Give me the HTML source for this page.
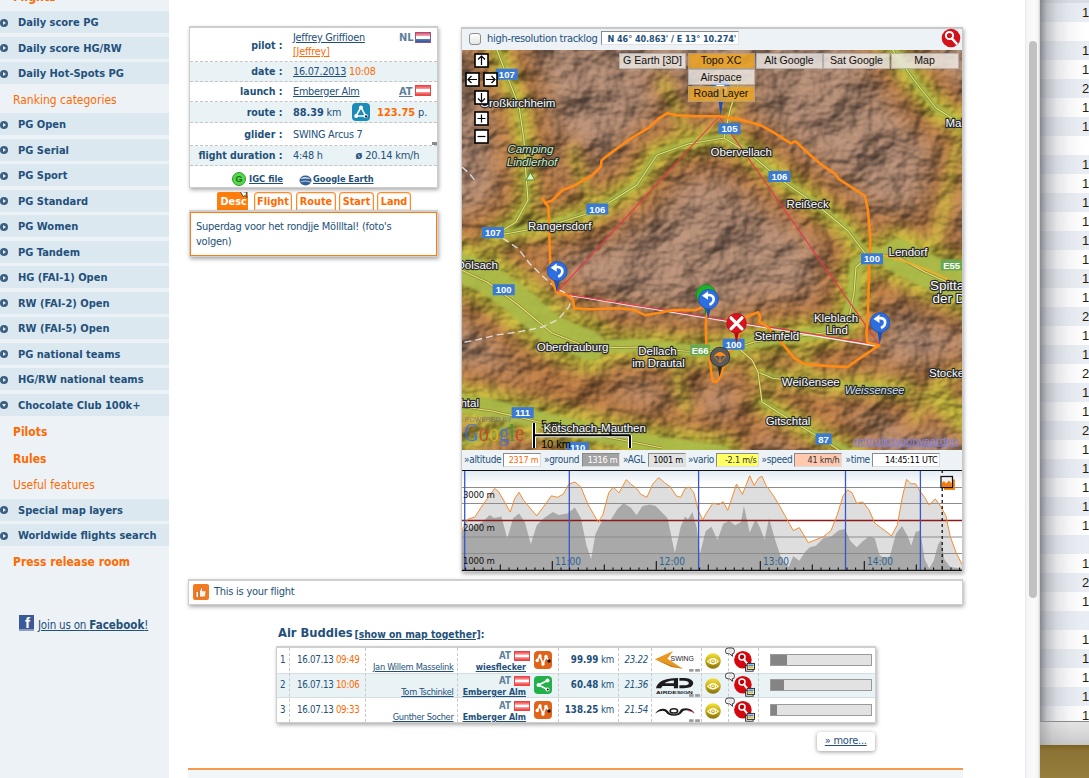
<!DOCTYPE html><html><head><meta charset="utf-8"><title>Flight</title><style>
*{box-sizing:border-box}
html,body{margin:0;padding:0}
body{width:1089px;height:778px;overflow:hidden;position:relative;background:#fff;font-family:"DejaVu Sans Condensed","Liberation Sans",sans-serif;font-size:11px;color:#23507a}
.a{position:absolute}
.t{position:absolute;white-space:nowrap;line-height:14px;letter-spacing:-0.25px}
.b{font-weight:bold;letter-spacing:0}
.o{color:#ff6a00}
.u{text-decoration:underline}
#side{left:0;top:0;width:169px;height:778px;background:#edf2f6}
.band{position:absolute;left:0;width:169px;height:22.3px;background:#dce8f0}
.mi{position:absolute;left:18px;white-space:nowrap;font-weight:bold;font-size:11px;line-height:22px;color:#23507a}
.mo{position:absolute;left:13px;white-space:nowrap;font-size:12px;line-height:22px;color:#ff6a00}
.bul{position:absolute;left:-0.3px;width:8px;height:8px;border-radius:4px;background:#3a5f80}
.bul:after{content:"";position:absolute;left:2.8px;top:1.8px;border-left:3.6px solid #e8f0f5;border-top:2.2px solid transparent;border-bottom:2.2px solid transparent}
.bul.d:after{left:1.8px;top:2.8px;border-top:3.6px solid #e8f0f5;border-left:2.2px solid transparent;border-right:2.2px solid transparent;border-bottom:0}
.panel{position:absolute;background:#fff;border:1px solid #cdcdcd;border-top-width:2px;box-shadow:1px 2px 4px rgba(0,0,0,.33)}
.row{position:absolute;left:0;width:247px;border-bottom:1px dashed #c4c4c4}
.alt{background:#e9f3f6}
.lab{position:absolute;right:154.5px;white-space:nowrap;font-weight:bold;font-size:10.5px;line-height:14px}
.val{position:absolute;left:103px;white-space:nowrap;font-size:10.8px;line-height:14px;letter-spacing:-0.25px}
</style></head><body>
<div id="side" class="a">
<div class="mo" style="top:-14.5px;font-weight:bold;font-size:12.3px">Flights</div>
<div class="band" style="top:11.2px"></div>
<div class="bul" style="top:18.9px"></div>
<div class="mi" style="top:12.2px">Daily score PG</div>
<div class="band" style="top:36.7px"></div>
<div class="bul" style="top:44.4px"></div>
<div class="mi" style="top:37.7px">Daily score HG/RW</div>
<div class="band" style="top:62.2px"></div>
<div class="bul" style="top:69.9px"></div>
<div class="mi" style="top:63.2px">Daily Hot-Spots PG</div>
<div class="mo" style="top:89px">Ranking categories</div>
<div class="band" style="top:113.2px"></div>
<div class="bul" style="top:120.9px"></div>
<div class="mi" style="top:114.2px">PG Open</div>
<div class="band" style="top:138.7px"></div>
<div class="bul" style="top:146.4px"></div>
<div class="mi" style="top:139.7px">PG Serial</div>
<div class="band" style="top:164.2px"></div>
<div class="bul" style="top:171.9px"></div>
<div class="mi" style="top:165.2px">PG Sport</div>
<div class="band" style="top:189.7px"></div>
<div class="bul" style="top:197.4px"></div>
<div class="mi" style="top:190.7px">PG Standard</div>
<div class="band" style="top:215.2px"></div>
<div class="bul" style="top:222.9px"></div>
<div class="mi" style="top:216.2px">PG Women</div>
<div class="band" style="top:240.7px"></div>
<div class="bul" style="top:248.4px"></div>
<div class="mi" style="top:241.7px">PG Tandem</div>
<div class="band" style="top:266.2px"></div>
<div class="bul" style="top:273.9px"></div>
<div class="mi" style="top:267.2px">HG (FAI-1) Open</div>
<div class="band" style="top:291.7px"></div>
<div class="bul" style="top:299.4px"></div>
<div class="mi" style="top:292.7px">RW (FAI-2) Open</div>
<div class="band" style="top:317.2px"></div>
<div class="bul" style="top:324.9px"></div>
<div class="mi" style="top:318.2px">RW (FAI-5) Open</div>
<div class="band" style="top:342.7px"></div>
<div class="bul" style="top:350.4px"></div>
<div class="mi" style="top:343.7px">PG national teams</div>
<div class="band" style="top:368.2px"></div>
<div class="bul" style="top:375.9px"></div>
<div class="mi" style="top:369.2px">HG/RW national teams</div>
<div class="band" style="top:393.7px"></div>
<div class="bul d" style="top:401.4px"></div>
<div class="mi" style="top:394.7px">Chocolate Club 100k+</div>
<div class="mo" style="top:421px;font-weight:bold">Pilots</div>
<div class="mo" style="top:448px;font-weight:bold">Rules</div>
<div class="mo" style="top:474px">Useful features</div>
<div class="band" style="top:498.7px"></div>
<div class="bul" style="top:506.4px"></div>
<div class="mi" style="top:499.7px">Special map layers</div>
<div class="band" style="top:524.2px"></div>
<div class="bul" style="top:531.9px"></div>
<div class="mi" style="top:525.2px">Worldwide flights search</div>
<div class="mo" style="top:551px;font-weight:bold">Press release room</div>
<div class="a" style="left:19px;top:615px;width:15px;height:16px;background:#3b5998;border-bottom:2px solid #8b9dc3"><div class="a" style="left:6px;top:0px;color:#fff;font:bold 15px/16px 'Liberation Sans',sans-serif">f</div></div>
<div class="t u" style="left:38px;top:618px;font-size:11.5px;letter-spacing:-0.2px">Join us on <b style="letter-spacing:0">Facebook</b>!</div>
</div>
<div class="panel" style="left:189px;top:26px;width:249px;height:162px">
<div class="row" style="top:1px;height:33px"><div class="lab" style="top:8.5px">pilot :</div></div>
<div class="row alt" style="top:34px;height:20px"><div class="lab" style="top:2.0px">date :</div></div>
<div class="row" style="top:54px;height:20px"><div class="lab" style="top:2.0px">launch :</div></div>
<div class="row alt" style="top:74px;height:21px"><div class="lab" style="top:2.5px">route :</div></div>
<div class="row" style="top:95px;height:23px"><div class="lab" style="top:3.5px">glider :</div></div>
<div class="row alt" style="top:118px;height:20px"><div class="lab" style="top:2.0px">flight duration :</div></div>
<div class="val u" style="top:3px">Jeffrey Griffioen</div>
<div class="val u o" style="top:17px">[Jeffrey]</div>
<div class="t b" style="left:209px;top:3px;color:#5d7f9c">NL</div><div class="a" style="left:225px;top:4px;width:16px;height:11px;border:1px solid #8a5a80;background:linear-gradient(#f0506a 0,#f8a0ac 30%,#ffffff 36%,#ffffff 62%,#5b7fc4 66%,#34549e 100%)"></div>
<div class="val" style="top:36.5px"><span class="u">16.07.2013</span> <span class="o">10:08</span></div>
<div class="val u" style="top:56.5px">Emberger Alm</div>
<div class="t b u" style="left:209px;top:56.5px;color:#5d7f9c">AT</div><div class="a" style="left:225px;top:57px;width:16px;height:11px;border:1px solid #e84444;background:linear-gradient(#f04a4a 0,#f79a9a 30%,#ffffff 36%,#ffffff 62%,#f79a9a 68%,#ee3b3b 100%)"></div>
<div class="val" style="top:77.7px"><b style="letter-spacing:0">88.39</b> km</div>
<svg class="a" style="left:162px;top:75px" width="18" height="18" viewBox="0 0 18 18"><rect width="18" height="18" rx="4" fill="#1b8bb8"/><path d="M9 4.2 L4 13 L13.6 13 Z" fill="none" stroke="#fff" stroke-width="1.6"/><circle cx="9" cy="4.5" r="2" fill="#fff"/><circle cx="4.2" cy="13" r="2" fill="#fff"/><circle cx="13.6" cy="13" r="2.1" fill="#fff"/><circle cx="14" cy="13.4" r="1.1" fill="#113"/></svg>
<div class="t" style="left:187px;top:77.7px"><b class="o" style="letter-spacing:0">123.75</b> p.</div>
<div class="val" style="top:99.5px">SWING Arcus 7</div>
<div class="a" style="left:242px;top:114px;width:5px;height:3px;background:#8a8a8a"></div>
<div class="val" style="top:120.5px">4:48 h</div>
<div class="t" style="left:165.5px;top:120.5px"><b style="letter-spacing:0">ø</b> 20.14 km/h</div>
<div class="a" style="left:42px;top:144px;width:14px;height:14px;border-radius:7px;background:#55d84a;border:1px solid #2c9b2a;color:#1d6b1c;font:bold 9px/12px 'Liberation Sans',sans-serif;text-align:center">G</div>
<div class="t b u" style="left:59px;top:143.5px;font-size:9.4px">IGC file</div>
<svg class="a" style="left:109px;top:146px" width="13" height="12" viewBox="0 0 13 12"><ellipse cx="6.5" cy="6.5" rx="6" ry="5" fill="#355f92"/><path d="M1 5 Q6 1 12 5 Q7 4 1 5Z" fill="#dfe8f2"/><path d="M1.5 8 Q7 6 12 8.5" stroke="#9db7d6" stroke-width="1.2" fill="none"/></svg>
<div class="t b u" style="left:123px;top:143.5px;font-size:9.2px">Google Earth</div>
</div>
<div class="a" style="left:216.7px;top:192px;width:31.5px;height:19px;background:#ff7d0a;border-radius:2px 2px 0 0"></div>
<div class="t b" style="left:220.5px;top:194.8px;color:#fff;font-size:10.8px">Desc</div>
<svg class="a" style="left:238.5px;top:191.5px" width="10" height="7" viewBox="0 2 12 9"><path d="M1 1 L10 2.5 L8.5 5 L10 9 L7 6.5 L5 8 Z" fill="#fff" stroke="#222" stroke-width="1"/></svg>
<div class="a" style="left:254px;top:192px;width:38px;height:18px;border:1px solid #ff8a2a;border-bottom:0;border-radius:4px 4px 0 0;box-shadow:inset 0 0 0 1px #ffe3cc"></div>
<div class="t b o" style="left:254px;width:38px;text-align:center;top:194.8px;font-size:10.8px">Flight</div>
<div class="a" style="left:296px;top:192px;width:40px;height:18px;border:1px solid #ff8a2a;border-bottom:0;border-radius:4px 4px 0 0;box-shadow:inset 0 0 0 1px #ffe3cc"></div>
<div class="t b o" style="left:296px;width:40px;text-align:center;top:194.8px;font-size:10.8px">Route</div>
<div class="a" style="left:339px;top:192px;width:35px;height:18px;border:1px solid #ff8a2a;border-bottom:0;border-radius:4px 4px 0 0;box-shadow:inset 0 0 0 1px #ffe3cc"></div>
<div class="t b o" style="left:339px;width:35px;text-align:center;top:194.8px;font-size:10.8px">Start</div>
<div class="a" style="left:377px;top:192px;width:34px;height:18px;border:1px solid #ff8a2a;border-bottom:0;border-radius:4px 4px 0 0;box-shadow:inset 0 0 0 1px #ffe3cc"></div>
<div class="t b o" style="left:377px;width:34px;text-align:center;top:194.8px;font-size:10.8px">Land</div>
<div class="a" style="left:189px;top:210px;width:249px;height:47.3px;background:#d0d0d0;box-shadow:1px 2px 4px rgba(0,0,0,.35)"></div>
<div class="a" style="left:190px;top:211.5px;width:247px;height:44.8px;background:#fff;border:1px solid #ff7a0f"></div>
<div class="t" style="left:196px;top:220px;line-height:14.8px;white-space:normal;width:236px">Superdag voor het rondjje Möllltal! (foto's<br>volgen)</div>
<div class="panel" style="left:188px;top:578.5px;width:775px;height:26.5px;border-color:#cfcfcf"></div>
<svg class="a" style="left:193px;top:584px" width="16" height="16" viewBox="0 0 16 16"><rect width="16" height="16" rx="2" fill="#f47a20"/><path d="M3 13.5 V7.5 H5.5 V13.5 Z M6.5 13 V7.5 L8.5 3 Q10 3 9.6 5 L9.3 6.8 H12.5 Q13.3 7.4 12.8 8.3 Q13.3 9 12.6 9.8 Q13 10.6 12.3 11.3 Q12.6 12.4 11.6 13 Z" fill="#fff3e6" stroke="#b85410" stroke-width=".6"/></svg>
<div class="t" style="left:214px;top:585px">This is your flight</div>
<div class="t b" style="left:278px;top:624px;font-size:12.8px;line-height:18px">Air Buddies</div>
<div class="t b" style="left:354.5px;top:626.5px;font-size:10.3px"><span class="u">[show on map together]</span>:</div>
<div class="panel" style="left:276px;top:646px;width:600px;height:77px;border-color:#cfcfcf"></div>
<div class="a alt" style="left:277px;top:672.5px;width:598px;height:25px;border-top:1px solid #d4dde2;border-bottom:1px solid #d4dde2"></div>
<div class="a" style="left:289px;top:648px;width:0;height:74px;border-left:1px dashed #c8c8c8"></div>
<div class="a" style="left:364.5px;top:648px;width:0;height:74px;border-left:1px dashed #c8c8c8"></div>
<div class="a" style="left:456.5px;top:648px;width:0;height:74px;border-left:1px dashed #c8c8c8"></div>
<div class="a" style="left:558px;top:648px;width:0;height:74px;border-left:1px dashed #c8c8c8"></div>
<div class="a" style="left:618px;top:648px;width:0;height:74px;border-left:1px dashed #c8c8c8"></div>
<div class="a" style="left:650.5px;top:648px;width:0;height:74px;border-left:1px dashed #c8c8c8"></div>
<div class="a" style="left:701px;top:648px;width:0;height:74px;border-left:1px dashed #c8c8c8"></div>
<div class="a" style="left:728px;top:648px;width:0;height:74px;border-left:1px dashed #c8c8c8"></div>
<div class="a" style="left:758px;top:648px;width:0;height:74px;border-left:1px dashed #c8c8c8"></div>
<div class="t" style="left:280px;top:653.0px;font-size:9.7px">1</div>
<div class="t" style="left:297px;top:653.0px;font-size:9.7px;letter-spacing:-0.3px">16.07.13 <span class="o">09:49</span></div>
<div class="t u" style="left:365px;width:88.5px;text-align:right;top:660.0px;font-size:9.2px;letter-spacing:-0.3px">Jan Willem Masselink</div>
<div class="t b" style="left:457px;width:54px;text-align:right;top:648.8px;font-size:9.7px;color:#5d7f9c">AT</div><div class="a" style="left:513.5px;top:650.8px;width:16px;height:10px;border:1px solid #e84444;background:linear-gradient(#f04a4a 0,#f79a9a 30%,#ffffff 36%,#ffffff 62%,#f79a9a 68%,#ee3b3b 100%)"></div>
<div class="t b u" style="left:457px;width:69px;text-align:right;top:660.0px;font-size:8.8px">wiesflecker</div>
<svg class="a" style="left:534px;top:650.5px" width="18" height="18" viewBox="0 0 18 18"><rect width="18" height="18" rx="4" fill="#e0631a"/><path d="M3 9.5 L6 5 L9 13 L12 5.5 L15 10" fill="none" stroke="#fff" stroke-width="1.6"/><circle cx="3.2" cy="9.5" r="1.7" fill="#fff"/><circle cx="6" cy="5" r="1.7" fill="#fff"/><circle cx="9" cy="13" r="1.7" fill="#fff"/><circle cx="12" cy="5.5" r="1.7" fill="#fff"/><circle cx="15" cy="10" r="1.7" fill="#111"/></svg>
<div class="t" style="left:559px;width:55px;text-align:right;top:653.0px;font-size:9.7px"><b style="letter-spacing:0">99.99</b> km</div>
<div class="t" style="left:619px;width:29px;text-align:right;top:653.0px;font-size:9.7px;font-style:italic;letter-spacing:-0.3px">23.22</div>
<svg class="a" style="left:705px;top:652.8px" width="16" height="16" viewBox="0 0 16 16"><defs><linearGradient id="gg0" x1="0" y1="0" x2="0" y2="1"><stop offset="0" stop-color="#f2e23a"/><stop offset=".5" stop-color="#c9ad16"/><stop offset="1" stop-color="#85700c"/></linearGradient></defs><circle cx="8" cy="8" r="7.8" fill="url(#gg0)"/><path d="M2.6 8.3 Q8 2.6 13.4 8.3 Q8 13.6 2.6 8.3Z" fill="none" stroke="#fffbe0" stroke-width="1.1"/><circle cx="8" cy="8.2" r="2.5" fill="none" stroke="#fffbe0" stroke-width="1.2"/><circle cx="8" cy="8.2" r=".9" fill="#fffbe0"/></svg>
<svg class="a" style="left:724px;top:647.0px" width="32" height="26" viewBox="0 0 32 26"><path d="M1.6 3.2 Q1.6 1 4.3 1 H7.9 Q10.3 1 10.3 3.2 V4.8 Q10.3 6.8 8.1 6.8 L8.6 9.3 L5.6 6.8 H4.3 Q1.6 6.8 1.6 4.8Z" fill="#fff" stroke="#222" stroke-width=".9"/><path d="M3.6 3 H8.3 M3.6 4.8 H8.3" stroke="#bbb" stroke-width=".7"/><circle cx="18.9" cy="12.7" r="8.8" fill="#d4060e"/><circle cx="18" cy="10" r="3" fill="#b00008" stroke="#fff" stroke-width="1.5"/><path d="M20 12.4 L25.3 19.4" stroke="#fff" stroke-width="2" stroke-linecap="round"/><rect x="21.6" y="18.6" width="7.5" height="5.6" fill="#fff" stroke="#222" stroke-width=".9"/><rect x="23.2" y="16.4" width="7.3" height="6" fill="#fff" stroke="#222" stroke-width=".9"/><rect x="24.2" y="17.4" width="5.3" height="2" fill="#4a8de0"/><rect x="24.2" y="19.4" width="5.3" height="2" fill="#d8c23a"/></svg>
<div class="a" style="left:769.5px;top:654.0px;width:102px;height:12px;background:#e2e2e2;border:1px solid #9a9a9a"><div class="a" style="left:0;top:0;width:16px;height:10px;background:#848484"></div></div>
<div class="t" style="left:280px;top:678.0px;font-size:9.7px">2</div>
<div class="t" style="left:297px;top:678.0px;font-size:9.7px;letter-spacing:-0.3px">16.07.13 <span class="o">10:06</span></div>
<div class="t u" style="left:365px;width:88.5px;text-align:right;top:685.0px;font-size:9.2px;letter-spacing:-0.3px">Tom Tschinkel</div>
<div class="t b" style="left:457px;width:54px;text-align:right;top:673.8px;font-size:9.7px;color:#5d7f9c">AT</div><div class="a" style="left:513.5px;top:675.8px;width:16px;height:10px;border:1px solid #e84444;background:linear-gradient(#f04a4a 0,#f79a9a 30%,#ffffff 36%,#ffffff 62%,#f79a9a 68%,#ee3b3b 100%)"></div>
<div class="t b u" style="left:457px;width:69px;text-align:right;top:685.0px;font-size:8.8px">Emberger Alm</div>
<svg class="a" style="left:534px;top:675.5px" width="18" height="18" viewBox="0 0 18 18"><rect width="18" height="18" rx="4" fill="#22b04a"/><path d="M13.5 4.5 L4.5 9 L13.5 13.5" fill="none" stroke="#fff" stroke-width="1.6"/><circle cx="13.5" cy="4.5" r="2" fill="#fff"/><circle cx="4.5" cy="9" r="2" fill="#fff"/><circle cx="13.5" cy="13.5" r="2" fill="#fff"/><circle cx="13.8" cy="13.6" r="1" fill="#111"/></svg>
<div class="t" style="left:559px;width:55px;text-align:right;top:678.0px;font-size:9.7px"><b style="letter-spacing:0">60.48</b> km</div>
<div class="t" style="left:619px;width:29px;text-align:right;top:678.0px;font-size:9.7px;font-style:italic;letter-spacing:-0.3px">21.36</div>
<svg class="a" style="left:705px;top:677.8px" width="16" height="16" viewBox="0 0 16 16"><defs><linearGradient id="gg1" x1="0" y1="0" x2="0" y2="1"><stop offset="0" stop-color="#f2e23a"/><stop offset=".5" stop-color="#c9ad16"/><stop offset="1" stop-color="#85700c"/></linearGradient></defs><circle cx="8" cy="8" r="7.8" fill="url(#gg1)"/><path d="M2.6 8.3 Q8 2.6 13.4 8.3 Q8 13.6 2.6 8.3Z" fill="none" stroke="#fffbe0" stroke-width="1.1"/><circle cx="8" cy="8.2" r="2.5" fill="none" stroke="#fffbe0" stroke-width="1.2"/><circle cx="8" cy="8.2" r=".9" fill="#fffbe0"/></svg>
<svg class="a" style="left:724px;top:672.0px" width="32" height="26" viewBox="0 0 32 26"><path d="M1.6 3.2 Q1.6 1 4.3 1 H7.9 Q10.3 1 10.3 3.2 V4.8 Q10.3 6.8 8.1 6.8 L8.6 9.3 L5.6 6.8 H4.3 Q1.6 6.8 1.6 4.8Z" fill="#fff" stroke="#222" stroke-width=".9"/><path d="M3.6 3 H8.3 M3.6 4.8 H8.3" stroke="#bbb" stroke-width=".7"/><circle cx="18.9" cy="12.7" r="8.8" fill="#d4060e"/><circle cx="18" cy="10" r="3" fill="#b00008" stroke="#fff" stroke-width="1.5"/><path d="M20 12.4 L25.3 19.4" stroke="#fff" stroke-width="2" stroke-linecap="round"/><rect x="21.6" y="18.6" width="7.5" height="5.6" fill="#fff" stroke="#222" stroke-width=".9"/><rect x="23.2" y="16.4" width="7.3" height="6" fill="#fff" stroke="#222" stroke-width=".9"/><rect x="24.2" y="17.4" width="5.3" height="2" fill="#4a8de0"/><rect x="24.2" y="19.4" width="5.3" height="2" fill="#d8c23a"/></svg>
<div class="a" style="left:769.5px;top:679.0px;width:102px;height:12px;background:#e2e2e2;border:1px solid #9a9a9a"><div class="a" style="left:0;top:0;width:13px;height:10px;background:#848484"></div></div>
<div class="t" style="left:280px;top:703.0px;font-size:9.7px">3</div>
<div class="t" style="left:297px;top:703.0px;font-size:9.7px;letter-spacing:-0.3px">16.07.13 <span class="o">09:33</span></div>
<div class="t u" style="left:365px;width:88.5px;text-align:right;top:710.0px;font-size:9.2px;letter-spacing:-0.3px">Gunther Socher</div>
<div class="t b" style="left:457px;width:54px;text-align:right;top:698.8px;font-size:9.7px;color:#5d7f9c">AT</div><div class="a" style="left:513.5px;top:700.8px;width:16px;height:10px;border:1px solid #e84444;background:linear-gradient(#f04a4a 0,#f79a9a 30%,#ffffff 36%,#ffffff 62%,#f79a9a 68%,#ee3b3b 100%)"></div>
<div class="t b u" style="left:457px;width:69px;text-align:right;top:710.0px;font-size:8.8px">Emberger Alm</div>
<svg class="a" style="left:534px;top:700.5px" width="18" height="18" viewBox="0 0 18 18"><rect width="18" height="18" rx="4" fill="#e0631a"/><path d="M3 9.5 L6 5 L9 13 L12 5.5 L15 10" fill="none" stroke="#fff" stroke-width="1.6"/><circle cx="3.2" cy="9.5" r="1.7" fill="#fff"/><circle cx="6" cy="5" r="1.7" fill="#fff"/><circle cx="9" cy="13" r="1.7" fill="#fff"/><circle cx="12" cy="5.5" r="1.7" fill="#fff"/><circle cx="15" cy="10" r="1.7" fill="#111"/></svg>
<div class="t" style="left:559px;width:55px;text-align:right;top:703.0px;font-size:9.7px"><b style="letter-spacing:0">138.25</b> km</div>
<div class="t" style="left:619px;width:29px;text-align:right;top:703.0px;font-size:9.7px;font-style:italic;letter-spacing:-0.3px">21.54</div>
<svg class="a" style="left:705px;top:702.8px" width="16" height="16" viewBox="0 0 16 16"><defs><linearGradient id="gg2" x1="0" y1="0" x2="0" y2="1"><stop offset="0" stop-color="#f2e23a"/><stop offset=".5" stop-color="#c9ad16"/><stop offset="1" stop-color="#85700c"/></linearGradient></defs><circle cx="8" cy="8" r="7.8" fill="url(#gg2)"/><path d="M2.6 8.3 Q8 2.6 13.4 8.3 Q8 13.6 2.6 8.3Z" fill="none" stroke="#fffbe0" stroke-width="1.1"/><circle cx="8" cy="8.2" r="2.5" fill="none" stroke="#fffbe0" stroke-width="1.2"/><circle cx="8" cy="8.2" r=".9" fill="#fffbe0"/></svg>
<svg class="a" style="left:724px;top:697.0px" width="32" height="26" viewBox="0 0 32 26"><path d="M1.6 3.2 Q1.6 1 4.3 1 H7.9 Q10.3 1 10.3 3.2 V4.8 Q10.3 6.8 8.1 6.8 L8.6 9.3 L5.6 6.8 H4.3 Q1.6 6.8 1.6 4.8Z" fill="#fff" stroke="#222" stroke-width=".9"/><path d="M3.6 3 H8.3 M3.6 4.8 H8.3" stroke="#bbb" stroke-width=".7"/><circle cx="18.9" cy="12.7" r="8.8" fill="#d4060e"/><circle cx="18" cy="10" r="3" fill="#b00008" stroke="#fff" stroke-width="1.5"/><path d="M20 12.4 L25.3 19.4" stroke="#fff" stroke-width="2" stroke-linecap="round"/><rect x="21.6" y="18.6" width="7.5" height="5.6" fill="#fff" stroke="#222" stroke-width=".9"/><rect x="23.2" y="16.4" width="7.3" height="6" fill="#fff" stroke="#222" stroke-width=".9"/><rect x="24.2" y="17.4" width="5.3" height="2" fill="#4a8de0"/><rect x="24.2" y="19.4" width="5.3" height="2" fill="#d8c23a"/></svg>
<div class="a" style="left:769.5px;top:704.0px;width:102px;height:12px;background:#e2e2e2;border:1px solid #9a9a9a"><div class="a" style="left:0;top:0;width:6px;height:10px;background:#848484"></div></div>
<svg class="a" style="left:645px;top:645px" width="120" height="80" viewBox="0 0 1089 726" font-family="Liberation Sans, sans-serif"><path d="M90 130 L255 55 L203 125 L345 215 L240 200 Z" fill="#e9981f"/><path d="M90 130 L240 200 L345 215 L250 188 Z" fill="#9a6a1a" opacity=".55"/><text x="232" y="143" font-size="62" fill="#222" textLength="212" lengthAdjust="spacingAndGlyphs">SWING</text><path d="M100 392 Q120 300 300 300 L300 392 L262 392 L262 372 L160 372 Q150 380 146 392 Z M178 348 L262 348 L262 322 Q200 326 178 348 Z" fill="#1b1b1f" fill-rule="evenodd"/><path d="M312 300 L360 300 Q438 306 438 348 Q436 392 352 392 L312 392 L312 366 L350 366 Q398 364 398 346 Q398 326 352 324 L312 324 Z" fill="#1b1b1f"/><text x="100" y="442" font-size="30" font-weight="bold" fill="#222" textLength="335" lengthAdjust="spacingAndGlyphs">AIRDESIGN</text><path d="M92 622 Q120 575 170 578 Q196 580 208 600 Q222 628 262 628 Q306 626 318 596 Q330 574 372 574 Q430 578 452 622 Q420 592 372 592 Q346 592 336 610 Q318 640 262 642 Q206 640 192 612 Q182 596 160 596 Q124 596 92 622 Z" fill="#1b1b1f"/><ellipse cx="262" cy="598" rx="34" ry="20" fill="none" stroke="#1b1b1f" stroke-width="14"/><path d="M392 596 Q430 600 446 618" fill="none" stroke="#d4203a" stroke-width="7"/><rect x="400" y="218" width="41" height="24" fill="#9a9a9a"/><rect x="455" y="218" width="43" height="24" fill="#9a9a9a"/><rect x="400" y="446" width="41" height="24" fill="#9a9a9a"/><rect x="455" y="446" width="43" height="24" fill="#9a9a9a"/><rect x="400" y="674" width="41" height="24" fill="#9a9a9a"/><rect x="455" y="674" width="43" height="24" fill="#9a9a9a"/></svg>
<div class="a" style="left:816.5px;top:731.5px;width:58.5px;height:19px;background:#fff;border-radius:3px;box-shadow:0 1px 4px rgba(0,0,0,.4)"></div>
<div class="t u" style="left:816.5px;width:58.5px;text-align:center;top:733.5px">» more...</div>
<div class="a" style="left:188px;top:768px;width:775px;height:10px;background:#f1f6f9;border-top:2px solid #f59a4a"></div>
<div class="panel" style="left:461px;top:26.5px;width:502px;height:545.5px;border-color:#c9c9c9;background:#edf2f6"></div>
<div class="a" style="left:469px;top:32.5px;width:12px;height:12px;border:1px solid #8e8e8e;border-radius:3px;background:linear-gradient(#fff,#e4e4e4)"></div>
<div class="t" style="left:487px;top:31.5px;font-size:11px;letter-spacing:-0.3px">high-resolution tracklog</div>
<div class="a" style="left:601px;top:31px;width:138px;height:14px;background:#fff;border:1px solid #8a8a8a;border-right-color:#e2e2e2;border-bottom-color:#e2e2e2"></div>
<div class="t b" style="left:607.5px;top:31.5px;font-size:9px;letter-spacing:-0.05px">N 46° 40.863' / E 13° 10.274'</div>
<svg class="a" style="left:941px;top:28px" width="20" height="20" viewBox="0 0 20 20"><circle cx="10" cy="10" r="9.3" fill="#d3131b"/><circle cx="8.5" cy="7.5" r="3.6" fill="none" stroke="#fff" stroke-width="2"/><path d="M11 10.5 L15.5 15.5" stroke="#fff" stroke-width="2.6" stroke-linecap="round"/></svg>
<div class="a" id="map" style="left:462px;top:50px;width:500px;height:400px;overflow:hidden;background:#a08674">
<svg class="a" style="left:0;top:0" width="500" height="400" viewBox="0 0 500 400">
<defs>
<filter id="relief" x="0" y="0" width="100%" height="100%" color-interpolation-filters="sRGB">
<feTurbulence type="fractalNoise" baseFrequency="0.022 0.027" numOctaves="4" seed="11" result="n"/>
<feDiffuseLighting in="n" surfaceScale="11.5" diffuseConstant="0.85" lighting-color="#ffffff" result="l"><feDistantLight azimuth="225" elevation="45"/></feDiffuseLighting>
<feComposite in="SourceGraphic" in2="l" operator="arithmetic" k1="0.80" k2="0.46" k3="0" k4="0"/>
</filter>
<filter id="b14" x="-20%" y="-20%" width="140%" height="140%"><feGaussianBlur stdDeviation="12"/></filter>
<filter id="b7" x="-20%" y="-20%" width="140%" height="140%"><feGaussianBlur stdDeviation="6"/></filter>
<filter id="b3" x="-20%" y="-20%" width="140%" height="140%"><feGaussianBlur stdDeviation="1.8"/></filter>
</defs>
<g filter="url(#relief)">
<rect width="500" height="400" fill="#a9856f"/>
<g filter="url(#b14)" fill="none" stroke="#b17642" stroke-linecap="round" stroke-linejoin="round">
<path d="M33 -10 L43 21 L57 56 L62 90 L64 125 L66 150 L52 172 L32 186" stroke-width="62"/>
<path d="M32 186 L60 180 L86 175 L134 160 L175 134 L195 104 L226 93 L262 87 L288 103 L319 129 L355 154 L386 180 L406 206" stroke-width="66"/>
<path d="M-10 215 L25 228 L55 250 L90 280 L128 296" stroke-width="100"/>
<path d="M128 296 L180 296 L222 300 L262 301 L292 291 L332 286 L368 281 L386 272 L392 242 L394 216 L408 205 L432 204 L463 221 L505 240" stroke-width="74"/>
<path d="M-10 352 L30 358 L60 366 L110 378 L150 386 L200 396 L260 404" stroke-width="80"/>
<path d="M300 352 L330 370 L360 388 L395 405" stroke-width="56"/>
<path d="M296 322 L330 330 L370 334 L410 336 L445 340" stroke-width="54"/>
<path d="M425 -10 L452 30 L474 58 L505 78" stroke-width="64"/>
<path d="M496 95 L486 140 L474 190 L463 221" stroke-width="44"/>
<path d="M60 366 L30 385 L-5 395" stroke-width="50"/>
<path d="M436 206 L468 222 L505 238" stroke-width="90"/>
<path d="M453 368 L463 344 L481 329 L505 320" stroke-width="40"/>
<path d="M480 350 L505 372" stroke-width="50"/>
<path d="M262 87 L268 60 L276 35" stroke-width="30"/>
<path d="M134 160 L120 130 L110 100" stroke-width="26"/>
<path d="M226 93 L215 60 L200 30" stroke-width="26"/>
<path d="M222 300 L215 330 L225 360" stroke-width="30"/>
<path d="M332 286 L345 310 L340 335" stroke-width="30"/>
</g>
<g filter="url(#b7)" fill="none" stroke="#b9ac3a" stroke-linecap="round" stroke-linejoin="round">
<path d="M33 -10 L43 21 L57 56 L62 90 L64 125 L66 150 L52 172 L32 186" stroke-width="22"/>
<path d="M32 186 L60 180 L86 175 L134 160 L175 134 L195 104 L226 93 L262 87 L288 103 L319 129 L355 154 L386 180 L406 206" stroke-width="25"/>
<path d="M-10 215 L25 228 L55 250 L90 280 L128 296" stroke-width="56"/>
<path d="M128 296 L180 296 L222 300 L262 301 L292 291 L332 286 L368 281 L386 272 L392 242 L394 216 L408 205 L432 204 L463 221 L505 240" stroke-width="32"/>
<path d="M-10 352 L30 358 L60 366 L110 378 L150 386 L200 396 L260 404" stroke-width="40"/>
<path d="M300 352 L330 370 L360 388 L395 405" stroke-width="22"/>
<path d="M296 322 L330 330 L370 334 L410 336 L445 340" stroke-width="20"/>
<path d="M425 -10 L452 30 L474 58 L505 78" stroke-width="26"/>
<path d="M496 95 L486 140 L474 190 L463 221" stroke-width="10"/>
<path d="M436 206 L468 222 L505 238" stroke-width="56"/>
<path d="M453 368 L463 344 L481 329 L505 320" stroke-width="9"/>
<path d="M480 350 L505 372" stroke-width="26"/>
<path d="M262 87 L268 60 L276 35" stroke-width="10"/>
<path d="M134 160 L120 130 L110 100" stroke-width="9"/>
<path d="M226 93 L215 60 L200 30" stroke-width="9"/>
<path d="M222 300 L215 330 L225 360" stroke-width="10"/>
<path d="M60 366 L30 385 L-5 395" stroke-width="18"/>
<path d="M332 286 L345 310 L340 335" stroke-width="10"/>
</g>
</g>
<g filter="url(#b3)" fill="none" stroke="#abbb4a" stroke-linecap="round" stroke-linejoin="round" opacity=".92">
<path d="M33 -10 L43 21 L57 56 L62 90 L64 125 L66 150 L52 172 L32 186" stroke-width="5"/>
<path d="M32 186 L60 180 L86 175 L134 160 L175 134 L195 104 L226 93 L262 87 L288 103 L319 129 L355 154 L386 180 L406 206" stroke-width="7"/>
<path d="M-10 215 L25 228 L55 250 L90 280 L128 296" stroke-width="30"/>
<path d="M128 296 L180 296 L222 300 L262 301 L292 291 L332 286 L368 281 L386 272 L392 242 L394 216 L408 205 L432 204 L463 221 L505 240" stroke-width="13"/>
<path d="M-10 352 L30 358 L60 366 L110 378 L150 386 L200 396 L260 404" stroke-width="18"/>
<path d="M300 352 L330 370 L360 388 L395 405" stroke-width="6"/>
<path d="M296 322 L330 330 L370 334 L410 336 L445 340" stroke-width="3"/>
<path d="M425 -10 L452 30 L474 58 L505 78" stroke-width="8"/>
<path d="M436 206 L468 222 L505 238" stroke-width="34"/>
<path d="M60 366 L30 385 L-5 395" stroke-width="4"/>
</g>
</svg>
<svg class="a" style="left:0;top:0" width="500" height="400" viewBox="0 0 500 400" font-family="Liberation Sans, sans-serif">
<path d="M33 -5 L43 21 L57 56 L62 90 L64 125 L66 150 L54 172 L32 186" fill="none" stroke="#7d7a2a" stroke-width="2.6" stroke-linejoin="round" opacity=".75"/>
<path d="M33 -5 L43 21 L57 56 L62 90 L64 125 L66 150 L54 172 L32 186" fill="none" stroke="#e6e07a" stroke-width="1.2" stroke-linejoin="round"/>
<path d="M32 186 L60 181 L86 176 L134 161 L175 135 L195 105 L226 94 L262 88 L288 104 L319 130 L355 155 L386 181 L406 207" fill="none" stroke="#7d7a2a" stroke-width="2.6" stroke-linejoin="round" opacity=".75"/>
<path d="M32 186 L60 181 L86 176 L134 161 L175 135 L195 105 L226 94 L262 88 L288 104 L319 130 L355 155 L386 181 L406 207" fill="none" stroke="#e6e07a" stroke-width="1.2" stroke-linejoin="round"/>
<path d="M-5 218 L25 232 L55 254 L90 283 L128 298 L180 297 L222 301 L262 302 L292 292 L332 287 L368 282 L386 273 L392 243 L394 217 L408 206 L432 205 L463 222 L505 241" fill="none" stroke="#7d7a2a" stroke-width="2.6" stroke-linejoin="round" opacity=".75"/>
<path d="M-5 218 L25 232 L55 254 L90 283 L128 298 L180 297 L222 301 L262 302 L292 292 L332 287 L368 282 L386 273 L392 243 L394 217 L408 206 L432 205 L463 222 L505 241" fill="none" stroke="#e6e07a" stroke-width="1.2" stroke-linejoin="round"/>
<path d="M-5 356 L30 361 L60 368 L110 380 L150 388 L200 398" fill="none" stroke="#7d7a2a" stroke-width="2.6" stroke-linejoin="round" opacity=".75"/>
<path d="M-5 356 L30 361 L60 368 L110 380 L150 388 L200 398" fill="none" stroke="#e6e07a" stroke-width="1.2" stroke-linejoin="round"/>
<path d="M300 352 L330 371 L360 389 L380 402" fill="none" stroke="#7d7a2a" stroke-width="2.6" stroke-linejoin="round" opacity=".75"/>
<path d="M300 352 L330 371 L360 389 L380 402" fill="none" stroke="#e6e07a" stroke-width="1.2" stroke-linejoin="round"/>
<path d="M296 322 L310 328 L330 331" fill="none" stroke="#7d7a2a" stroke-width="2.6" stroke-linejoin="round" opacity=".75"/>
<path d="M296 322 L310 328 L330 331" fill="none" stroke="#e6e07a" stroke-width="1.2" stroke-linejoin="round"/>
<path d="M274 296 L290 310 L296 322 L300 352" fill="none" stroke="#7d7a2a" stroke-width="2.6" stroke-linejoin="round" opacity=".75"/>
<path d="M274 296 L290 310 L296 322 L300 352" fill="none" stroke="#e6e07a" stroke-width="1.2" stroke-linejoin="round"/>
<path d="M427 -5 L452 30 L474 58 L505 78" fill="none" stroke="#7d7a2a" stroke-width="2.6" stroke-linejoin="round" opacity=".75"/>
<path d="M427 -5 L452 30 L474 58 L505 78" fill="none" stroke="#e6e07a" stroke-width="1.2" stroke-linejoin="round"/>
<path d="M262 88 L268 60 L276 35" fill="none" stroke="#7d7a2a" stroke-width="2.6" stroke-linejoin="round" opacity=".75"/>
<path d="M262 88 L268 60 L276 35" fill="none" stroke="#e6e07a" stroke-width="1.2" stroke-linejoin="round"/>
<path d="M420 205 L445 212 L470 222 L500 236" fill="none" stroke="#e8b030" stroke-width="2.2"/>
<path d="M31 183 L42 189 L56 198.5 L68 214 L80.6 226 L94.5 238.6 L110 246.4 L107 257 L96 269.5 L80.6 277 L56 282 L34 285 L16 289.6 L0 292.7" fill="none" stroke="#e9e6e6" stroke-width="1.4" stroke-dasharray="7 4" opacity=".9"/>
<path d="M0 117 L8 124 L14 132" fill="none" stroke="#e9e6e6" stroke-width="1.4" stroke-dasharray="7 4" opacity=".9"/>
<path d="M100 244 L417 296.5" stroke="#f2f2f2" stroke-width="1.3" fill="none"/>
<path d="M94.6 242.6 L257.1 66.5 L417.5 295 Z" stroke="#f0324a" stroke-width="1.1" fill="none"/>
<path d="M257.5 328 L254 332 L250.9 331.3 L249.4 323.6 L247.6 308.2 L244.3 292.7 L243.8 275.1 L244.7 264.1 L245.4 260.8 L240.8 256.8 L233.4 260.3 L220 259.9 L209.8 260.3 L195 263.3 L183.2 265.1 L171.4 259.7 L156.6 258.3 L127.1 259.2 L112.3 258.3 L110.8 249.4 L104.9 245 L94.6 242.6 L88.7 227.3 L88.1 209.5 L87.5 191.8 L86.9 168.2 L86.3 156.4 L83 153 L90.2 150.4 L100.5 140.1 L112.3 135.7 L130 125.3 L138.9 116.5 L139.5 110.6 L144.8 106.1 L156.6 97.3 L171.4 86.9 L186.2 78.1 L198 67.7 L205.4 63.3 L215.7 65.4 L233.4 66.2 L257.1 66.2 L277.8 69.4 L298 74.9 L311.9 82.6 L328.8 93.4 L333.5 91.2 L347.3 104.2 L359.7 115 L373.5 124.2 L376.6 128.8 L402.8 145.8 L405.9 159.7 L408.4 189.9 L407.5 210.8 L406.5 241.7 L405.9 269.4 L404.4 281.8 L405.3 292.6 L417.3 295.4 L409.6 300.4 L396.3 309.3 L385.3 317 L363.3 315.9 L341.3 313.7 L332.4 308.2 L321.4 294.9 L308.2 279.5 L297.2 271.1 L298.3 267.4 L296.1 262.3 L282.9 267.4 L278 280 L274.5 294.9 L268.5 301.5 L259.7 321.4 L257.5 328" fill="none" stroke="#ff8a14" stroke-width="2.6" stroke-linejoin="round" stroke-linecap="round"/>
<path d="M80 148 L86 156" stroke="#ff8a14" stroke-width="2.2"/>
<rect x="33.8" y="18.7" width="22" height="11" fill="#3b7ad1"/><text x="44.8" y="27.8" font-size="9.5" font-weight="bold" fill="#fff" text-anchor="middle">107</text>
<rect x="19.9" y="177.1" width="22" height="11" fill="#3b7ad1"/><text x="30.9" y="186.2" font-size="9.5" font-weight="bold" fill="#fff" text-anchor="middle">107</text>
<rect x="124.30000000000001" y="153.5" width="22" height="11" fill="#3b7ad1"/><text x="135.3" y="162.6" font-size="9.5" font-weight="bold" fill="#fff" text-anchor="middle">106</text>
<rect x="256.5" y="73.2" width="22" height="11" fill="#3b7ad1"/><text x="267.5" y="82.3" font-size="9.5" font-weight="bold" fill="#fff" text-anchor="middle">105</text>
<rect x="306.4" y="121.0" width="22" height="11" fill="#3b7ad1"/><text x="317.4" y="130.1" font-size="9.5" font-weight="bold" fill="#fff" text-anchor="middle">106</text>
<rect x="30.700000000000003" y="234.2" width="22" height="11" fill="#3b7ad1"/><text x="41.7" y="243.29999999999998" font-size="9.5" font-weight="bold" fill="#fff" text-anchor="middle">100</text>
<rect x="399.0" y="203.3" width="22" height="11" fill="#3b7ad1"/><text x="410" y="212.4" font-size="9.5" font-weight="bold" fill="#fff" text-anchor="middle">100</text>
<rect x="260.6" y="288.7" width="22" height="11" fill="#3b7ad1"/><text x="271.6" y="297.8" font-size="9.5" font-weight="bold" fill="#fff" text-anchor="middle">100</text>
<rect x="49.7" y="357.2" width="22" height="11" fill="#3b7ad1"/><text x="60.7" y="366.3" font-size="9.5" font-weight="bold" fill="#fff" text-anchor="middle">111</text>
<rect x="104.7" y="392.1" width="22" height="11" fill="#3b7ad1"/><text x="115.7" y="401.20000000000005" font-size="9.5" font-weight="bold" fill="#fff" text-anchor="middle">110</text>
<rect x="353.6" y="383.4" width="16" height="11" fill="#3b7ad1"/><text x="361.6" y="392.5" font-size="9.5" font-weight="bold" fill="#fff" text-anchor="middle">87</text>
<rect x="228.2" y="294.5" width="20" height="11" fill="#6aa84f"/><text x="238.2" y="303.6" font-size="9.5" font-weight="bold" fill="#fff" text-anchor="middle">E66</text>
<rect x="478.7" y="209.5" width="22" height="11" fill="#6aa84f"/><text x="489.7" y="218.6" font-size="9.5" font-weight="bold" fill="#fff" text-anchor="middle">E55</text>
<text x="18" y="57" font-size="11.5" text-anchor="start" fill="#fff" stroke="#2a2a2a" stroke-width="2.4" stroke-linejoin="round" paint-order="stroke" >Großkirchheim</text>
<text x="68.4" y="102.5" font-size="11.5" text-anchor="middle" fill="#c9efc0" stroke="#2a2a2a" stroke-width="2.4" stroke-linejoin="round" paint-order="stroke" font-style="italic">Camping</text>
<text x="70" y="115.5" font-size="11.5" text-anchor="middle" fill="#c9efc0" stroke="#2a2a2a" stroke-width="2.4" stroke-linejoin="round" paint-order="stroke" font-style="italic">Lindlerhof</text>
<path d="M64 130 L68.4 122.5 L72.8 130 Z" fill="#d8f5c8" stroke="#4e8a3a" stroke-width="1"/>
<text x="97.7" y="180.4" font-size="11.5" text-anchor="middle" fill="#fff" stroke="#2a2a2a" stroke-width="2.4" stroke-linejoin="round" paint-order="stroke" >Rangersdorf</text>
<text x="36" y="219" font-size="11.5" text-anchor="end" fill="#fff" stroke="#2a2a2a" stroke-width="2.4" stroke-linejoin="round" paint-order="stroke" >Dölsach</text>
<text x="110.6" y="300.8" font-size="11.5" text-anchor="middle" fill="#fff" stroke="#2a2a2a" stroke-width="2.4" stroke-linejoin="round" paint-order="stroke" >Oberdrauburg</text>
<text x="195.5" y="305" font-size="11.5" text-anchor="middle" fill="#fff" stroke="#2a2a2a" stroke-width="2.4" stroke-linejoin="round" paint-order="stroke" >Dellach</text>
<text x="196.5" y="317" font-size="11.5" text-anchor="middle" fill="#fff" stroke="#2a2a2a" stroke-width="2.4" stroke-linejoin="round" paint-order="stroke" >im Drautal</text>
<text x="279.3" y="106" font-size="11.5" text-anchor="middle" fill="#fff" stroke="#2a2a2a" stroke-width="2.4" stroke-linejoin="round" paint-order="stroke" >Obervellach</text>
<text x="345.7" y="158.3" font-size="11.5" text-anchor="middle" fill="#fff" stroke="#2a2a2a" stroke-width="2.4" stroke-linejoin="round" paint-order="stroke" >Reißeck</text>
<text x="446" y="206.2" font-size="11.5" text-anchor="middle" fill="#fff" stroke="#2a2a2a" stroke-width="2.4" stroke-linejoin="round" paint-order="stroke" >Lendorf</text>
<text x="468" y="239.5" font-size="13.4" text-anchor="start" fill="#fff" stroke="#2a2a2a" stroke-width="2.4" stroke-linejoin="round" paint-order="stroke" >Spittal</text>
<text x="470.5" y="252.5" font-size="13.4" text-anchor="start" fill="#fff" stroke="#2a2a2a" stroke-width="2.4" stroke-linejoin="round" paint-order="stroke" >der Drau</text>
<text x="374" y="271.5" font-size="11.5" text-anchor="middle" fill="#fff" stroke="#2a2a2a" stroke-width="2.4" stroke-linejoin="round" paint-order="stroke" >Kleblach</text>
<text x="375" y="284.3" font-size="11.5" text-anchor="middle" fill="#fff" stroke="#2a2a2a" stroke-width="2.4" stroke-linejoin="round" paint-order="stroke" >Lind</text>
<text x="314.8" y="289.5" font-size="11.5" text-anchor="middle" fill="#fff" stroke="#2a2a2a" stroke-width="2.4" stroke-linejoin="round" paint-order="stroke" >Steinfeld</text>
<text x="348.8" y="335.8" font-size="11.5" text-anchor="middle" fill="#fff" stroke="#2a2a2a" stroke-width="2.4" stroke-linejoin="round" paint-order="stroke" >Weißensee</text>
<text x="412.6" y="344" font-size="11" text-anchor="middle" fill="#cfe0f7" stroke="#2a2a2a" stroke-width="2.4" stroke-linejoin="round" paint-order="stroke" font-style="italic">Weissensee</text>
<text x="467" y="327" font-size="11.5" text-anchor="start" fill="#fff" stroke="#2a2a2a" stroke-width="2.4" stroke-linejoin="round" paint-order="stroke" >Stockenboi</text>
<text x="326" y="375.4" font-size="11.5" text-anchor="middle" fill="#fff" stroke="#2a2a2a" stroke-width="2.4" stroke-linejoin="round" paint-order="stroke" >Gitschtal</text>
<text x="17" y="357" font-size="11.5" text-anchor="end" fill="#fff" stroke="#2a2a2a" stroke-width="2.4" stroke-linejoin="round" paint-order="stroke" >Lesachtal</text>
<text x="483.5" y="77" font-size="11.5" text-anchor="start" fill="#fff" stroke="#2a2a2a" stroke-width="2.4" stroke-linejoin="round" paint-order="stroke" >Malta</text>
<text x="3" y="372" font-size="6.5" fill="#6a6a8a" opacity=".8" letter-spacing=".3">POWERED BY</text>
<text x="2" y="391" font-family="Liberation Serif, serif" font-size="26" opacity=".85" textLength="60" lengthAdjust="spacingAndGlyphs"><tspan fill="#3a6fe0">G</tspan><tspan fill="#d63a2a">o</tspan><tspan fill="#e8b020">o</tspan><tspan fill="#3a6fe0">g</tspan><tspan fill="#2f9a45">l</tspan><tspan fill="#d63a2a">e</tspan></text>
<text x="79" y="378" font-size="11" fill="#000">5 mi</text>
<text x="79" y="397.5" font-size="11" fill="#000">10 km</text>
<path d="M72 373 V398 M72 385.3 H168 M148.5 373 V385.3 M168 385.3 V398" fill="none" stroke="#fff" stroke-width="4"/>
<path d="M72 373 V398 M72 385.3 H168 M148.5 373 V385.3 M168 385.3 V398" fill="none" stroke="#000" stroke-width="2"/>
<text x="132.7" y="382" font-size="11.5" text-anchor="middle" fill="#fff" stroke="#2a2a2a" stroke-width="2.4" stroke-linejoin="round" paint-order="stroke" >Kötschach-Mauthen</text>
<text x="496.3" y="394.5" font-size="11" text-anchor="end" fill="#8484e8" text-decoration="underline">gebruiksvoorwaarden</text>
<path d="M256.09999999999997 48.5 L258.7 65.7 L261.3 48.5 Z" fill="#1c4fb5"/>
<circle cx="258.7" cy="40.5" r="9.8" fill="#2d6fe0" stroke="#1c4fb5" stroke-width=".8"/>
<path d="M259.7 46.0 Q264.7 43.5 263.7 39.0 Q262.2 35.5 257.7 36.3" fill="none" stroke="#fff" stroke-width="2.6"/>
<path d="M258.2 32.5 L252.2 37.0 L258.2 41.0 Z" fill="#fff"/>
<path d="M92.60000000000001 229.3 L94.6 242.6 L97.8 229.3 Z" fill="#1c4fb5"/>
<circle cx="95.2" cy="221.3" r="9.8" fill="#2d6fe0" stroke="#1c4fb5" stroke-width=".8"/>
<path d="M96.2 226.8 Q101.2 224.3 100.2 219.8 Q98.7 216.3 94.2 217.10000000000002" fill="none" stroke="#fff" stroke-width="2.6"/>
<path d="M94.7 213.3 L88.7 217.8 L94.7 221.8 Z" fill="#fff"/>
<path d="M241.4 252.5 L243.5 266 L246.6 252.5 Z" fill="#178a1e"/>
<circle cx="244" cy="244.5" r="9.8" fill="#22b02a" stroke="#178a1e" stroke-width=".8"/>
<path d="M243.9 257.3 L246 269.6 L249.1 257.3 Z" fill="#1c4fb5"/>
<circle cx="246.5" cy="249.3" r="9.8" fill="#2d6fe0" stroke="#1c4fb5" stroke-width=".8"/>
<path d="M247.5 254.8 Q252.5 252.3 251.5 247.8 Q250.0 244.3 245.5 245.10000000000002" fill="none" stroke="#fff" stroke-width="2.6"/>
<path d="M246.0 241.3 L240.0 245.8 L246.0 249.8 Z" fill="#fff"/>
<path d="M415.4 280.5 L417.7 294.5 L420.6 280.5 Z" fill="#1c4fb5"/>
<circle cx="418" cy="272.5" r="9.8" fill="#2d6fe0" stroke="#1c4fb5" stroke-width=".8"/>
<path d="M419 278.0 Q424 275.5 423 271.0 Q421.5 267.5 417 268.3" fill="none" stroke="#fff" stroke-width="2.6"/>
<path d="M417.5 264.5 L411.5 269.0 L417.5 273.0 Z" fill="#fff"/>
<path d="M271.9 281.3 L274.5 293.8 L277.1 281.3 Z" fill="#a80f16"/>
<circle cx="274.5" cy="273.3" r="9.8" fill="#d8141c" stroke="#a80f16" stroke-width=".8"/>
<path d="M269 267.8 L280 278.8 M280 267.8 L269 278.8" stroke="#fff" stroke-width="3.2" stroke-linecap="round"/>
<path d="M255.4 315 L257.5 327 L260.6 315 Z" fill="#2b2b2b"/>
<circle cx="258" cy="307" r="9.8" fill="#5a5a5a" stroke="#2b2b2b" stroke-width=".8"/>
<path d="M251.5 306.5 Q258 297.5 264.5 306.5 Q261 305 258 306.5 Q255 305 251.5 306.5Z" fill="#ff8a14"/><path d="M252 306.5 L258 312.5 L264 306.5 M258 306.5 V312.5" stroke="#ff8a14" stroke-width=".8" fill="none"/>
</svg>
<div class="a" style="left:157px;top:3px;width:67px;height:15.5px;background:rgba(240,236,232,.8);border:1px solid rgba(160,160,160,.7);font:10.6px/13.5px 'Liberation Sans',sans-serif;color:#111;text-align:center;white-space:nowrap">G Earth [3D]</div>
<div class="a" style="left:225.5px;top:3px;width:67px;height:15.5px;background:rgba(238,165,40,.86);border:1px solid rgba(160,160,160,.7);font:10.6px/13.5px 'Liberation Sans',sans-serif;color:#111;text-align:center;white-space:nowrap">Topo XC</div>
<div class="a" style="left:293.5px;top:3px;width:67px;height:15.5px;background:rgba(240,236,232,.8);border:1px solid rgba(160,160,160,.7);font:10.6px/13.5px 'Liberation Sans',sans-serif;color:#111;text-align:center;white-space:nowrap">Alt Google</div>
<div class="a" style="left:361px;top:3px;width:67px;height:15.5px;background:rgba(240,236,232,.8);border:1px solid rgba(160,160,160,.7);font:10.6px/13.5px 'Liberation Sans',sans-serif;color:#111;text-align:center;white-space:nowrap">Sat Google</div>
<div class="a" style="left:428.5px;top:3px;width:68px;height:15.5px;background:rgba(240,236,232,.8);border:1px solid rgba(160,160,160,.7);font:10.6px/13.5px 'Liberation Sans',sans-serif;color:#111;text-align:center;white-space:nowrap">Map</div>
<div class="a" style="left:225.5px;top:19.3px;width:67px;height:16px;background:rgba(240,236,232,.8);border:1px solid rgba(160,160,160,.7);font:10.6px/14px 'Liberation Sans',sans-serif;color:#111;text-align:center;white-space:nowrap">Airspace</div>
<div class="a" style="left:225.5px;top:36.3px;width:67px;height:15.5px;background:rgba(238,165,40,.86);border:1px solid rgba(160,160,160,.7);font:10.6px/13.5px 'Liberation Sans',sans-serif;color:#111;text-align:center;white-space:nowrap">Road Layer</div>
<svg class="a" style="left:12px;top:3px" width="15" height="15" viewBox="0 0 15 15"><rect x="1" y="1" width="13" height="13" fill="#fff" stroke="#000" stroke-width="1.6"/><path d="M7.5 12 V3.2 M4 6.5 L7.5 3 L11 6.5" fill="none" stroke="#000" stroke-width="1.2"/></svg>
<svg class="a" style="left:3px;top:21.5px" width="15" height="15" viewBox="0 0 15 15"><rect x="1" y="1" width="13" height="13" fill="#fff" stroke="#000" stroke-width="1.6"/><path d="M12 7.5 H3.2 M6.5 4 L3 7.5 L6.5 11" fill="none" stroke="#000" stroke-width="1.2"/></svg>
<svg class="a" style="left:21px;top:21.5px" width="15" height="15" viewBox="0 0 15 15"><rect x="1" y="1" width="13" height="13" fill="#fff" stroke="#000" stroke-width="1.6"/><path d="M3 7.5 H11.8 M8.5 4 L12 7.5 L8.5 11" fill="none" stroke="#000" stroke-width="1.2"/></svg>
<svg class="a" style="left:12px;top:39.5px" width="15" height="15" viewBox="0 0 15 15"><rect x="1" y="1" width="13" height="13" fill="#fff" stroke="#000" stroke-width="1.6"/><path d="M7.5 3 V11.8 M4 8.5 L7.5 12 L11 8.5" fill="none" stroke="#000" stroke-width="1.2"/></svg>
<svg class="a" style="left:12px;top:60.5px" width="15" height="15" viewBox="0 0 15 15"><rect x="1" y="1" width="13" height="13" fill="#fff" stroke="#000" stroke-width="1.6"/><path d="M7.5 3.5 V11.5 M3.5 7.5 H11.5" fill="none" stroke="#000" stroke-width="1.2"/></svg>
<svg class="a" style="left:12px;top:78.5px" width="15" height="15" viewBox="0 0 15 15"><rect x="1" y="1" width="13" height="13" fill="#fff" stroke="#000" stroke-width="1.6"/><path d="M3.5 7.5 H11.5" fill="none" stroke="#000" stroke-width="1.2"/></svg>
</div>
<div class="t" style="left:464px;top:452.5px;font-size:10px;letter-spacing:-0.3px">»altitude</div>
<div class="a" style="left:503px;top:453px;width:38px;height:14px;background:#fff;border:1px solid #8a8a8a;border-right-color:#dcdcdc;border-bottom-color:#dcdcdc;color:#ff6a00;font-size:9px;line-height:12px;text-align:right;padding-right:1.5px;white-space:nowrap;letter-spacing:-0.2px">2317 m</div>
<div class="t" style="left:544px;top:452.5px;font-size:10px;letter-spacing:-0.3px">»ground</div>
<div class="a" style="left:582px;top:453px;width:38px;height:14px;background:#a3a3a3;border:1px solid #8a8a8a;border-right-color:#dcdcdc;border-bottom-color:#dcdcdc;color:#fff;font-size:9px;line-height:12px;text-align:right;padding-right:1.5px;white-space:nowrap;letter-spacing:-0.2px">1316 m</div>
<div class="t" style="left:623px;top:452.5px;font-size:10px;letter-spacing:-0.3px">»AGL</div>
<div class="a" style="left:647.5px;top:453px;width:38px;height:14px;background:#e2e2e2;border:1px solid #8a8a8a;border-right-color:#dcdcdc;border-bottom-color:#dcdcdc;color:#000;font-size:9px;line-height:12px;text-align:right;padding-right:1.5px;white-space:nowrap;letter-spacing:-0.2px">1001 m</div>
<div class="t" style="left:688px;top:452.5px;font-size:10px;letter-spacing:-0.3px">»vario</div>
<div class="a" style="left:716px;top:453px;width:43px;height:14px;background:#ffff66;border:1px solid #8a8a8a;border-right-color:#dcdcdc;border-bottom-color:#dcdcdc;color:#333;font-size:9px;line-height:12px;text-align:right;padding-right:1.5px;white-space:nowrap;letter-spacing:-0.2px">-2.1 m/s</div>
<div class="t" style="left:761.5px;top:452.5px;font-size:10px;letter-spacing:-0.3px">»speed</div>
<div class="a" style="left:794px;top:453px;width:48px;height:14px;background:#ffc9b0;border:1px solid #8a8a8a;border-right-color:#dcdcdc;border-bottom-color:#dcdcdc;color:#333;font-size:9px;line-height:12px;text-align:right;padding-right:1.5px;white-space:nowrap;letter-spacing:-0.2px">41 km/h</div>
<div class="t" style="left:845.5px;top:452.5px;font-size:10px;letter-spacing:-0.3px">»time</div>
<div class="a" style="left:872px;top:453px;width:68px;height:14px;background:#fff;border:1px solid #8a8a8a;border-right-color:#dcdcdc;border-bottom-color:#dcdcdc;color:#000;font-size:9px;line-height:12px;text-align:right;padding-right:1.5px;white-space:nowrap;letter-spacing:-0.2px">14:45:11 UTC</div>
<svg class="a" style="left:462px;top:470px" width="500" height="101" viewBox="462 470 500 101" font-family="DejaVu Sans Condensed, Liberation Sans, sans-serif">
<defs><linearGradient id="cg" x1="0" y1="0" x2="0" y2="1"><stop offset="0" stop-color="#dfe9f2"/><stop offset=".14" stop-color="#ffffff"/></linearGradient></defs>
<rect x="462" y="470" width="500" height="101" fill="url(#cg)"/>
<path d="M462 571 L462.0 530.0 L462.3 529.6 L467.6 519.3 L475.0 517.0 L480.9 507.6 L488.2 497.3 L494.7 488.5 L498.5 491.4 L504.4 501.7 L510.2 512.0 L514.6 498.8 L519.0 492.3 L523.5 500.2 L530.8 509.0 L536.7 515.8 L544.0 506.1 L551.4 495.8 L557.3 497.3 L563.1 494.4 L569.0 484.0 L574.9 482.0 L580.8 487.0 L588.1 504.6 L594.0 514.9 L598.4 522.3 L602.8 514.9 L608.7 492.9 L613.1 487.0 L619.0 492.9 L626.3 479.7 L630.7 484.0 L636.6 488.5 L641.0 494.4 L646.9 497.3 L652.8 484.0 L658.6 477.6 L664.5 482.6 L670.4 487.0 L676.3 495.8 L680.7 497.3 L685.1 488.5 L689.5 487.0 L693.9 492.9 L698.3 510.5 L702.7 519.9 L707.1 512.0 L713.0 503.2 L718.9 504.6 L723.3 501.7 L727.7 510.5 L733.6 492.9 L736.5 484.0 L742.4 494.4 L749.7 475.8 L754.1 485.5 L758.5 478.2 L762.0 476.3 L766.0 485.3 L773.6 495.9 L778.1 503.4 L785.7 517.0 L793.2 530.6 L799.3 527.6 L808.3 542.7 L815.9 539.7 L823.4 536.7 L831.0 530.6 L837.0 515.5 L843.1 495.9 L847.6 489.8 L852.1 492.9 L856.7 503.4 L862.7 501.9 L868.8 509.5 L874.8 523.1 L880.8 527.6 L886.9 532.1 L891.4 536.0 L897.5 524.6 L902.0 498.9 L906.5 479.3 L911.1 483.8 L915.6 483.8 L920.1 491.4 L924.7 497.4 L929.2 505.0 L935.2 498.9 L939.8 505.0 L945.8 515.5 L950.3 536.7 L956.4 553.3 L962.0 564.5 L962 571 Z" fill="#dedede"/>
<path d="M462 571 L462 531 L462.3 531.1 L467.6 529.6 L476.4 525.2 L482.3 522.3 L489.7 514.9 L494.1 517.9 L501.4 516.4 L507.3 538.4 L513.2 517.9 L519.1 513.5 L524.9 522.3 L530.8 544.3 L536.7 525.2 L544.0 517.9 L552.9 512.0 L558.7 514.9 L567.5 513.5 L574.9 507.6 L580.8 517.9 L586.6 545.8 L591.1 559.0 L595.5 534.0 L602.8 519.3 L610.2 520.8 L617.5 509.1 L623.4 503.2 L630.7 507.6 L636.6 514.9 L642.5 506.1 L649.8 504.6 L655.7 506.1 L661.6 512.0 L667.5 517.9 L674.8 553.1 L680.7 526.7 L685.1 516.4 L688.0 519.3 L692.4 512.0 L696.8 528.2 L699.8 554.6 L705.7 531.1 L711.5 526.7 L717.4 539.9 L723.3 523.7 L729.2 520.8 L735.0 525.2 L740.9 522.3 L743.9 506.1 L749.7 532.6 L755.6 519.3 L760.0 527.6 L764.5 539.7 L769.1 518.5 L775.1 539.7 L781.1 557.8 L788.7 566.9 L793.2 556.3 L799.3 560.8 L805.3 551.8 L809.8 547.3 L815.9 545.7 L823.4 538.2 L831.0 536.7 L838.5 530.6 L844.6 529.1 L850.6 541.2 L856.7 547.3 L862.7 541.2 L868.8 536.7 L874.8 538.2 L879.3 554.8 L883.9 557.8 L889.9 556.3 L896.0 533.7 L902.0 526.1 L908.0 536.7 L911.1 545.7 L915.6 532.1 L920.1 530.6 L924.7 559.3 L929.2 568.4 L933.7 560.8 L938.2 544.2 L941.3 539.7 L944.3 559.3 L950.3 566.9 L961.8 568.4 L962 571 Z" fill="#a9a9a9"/>
<path d="M462 487.5 H962" stroke="#8c8c8c" stroke-width="1"/>
<path d="M462 503.5 H962" stroke="#8c8c8c" stroke-width="1"/>
<path d="M462 537 H962" stroke="#8c8c8c" stroke-width="1"/>
<path d="M462 553.5 H962" stroke="#8c8c8c" stroke-width="1"/>
<path d="M462 520.5 H962" stroke="#8b1a1a" stroke-width="1.4"/>
<path d="M462.0 530.0 L462.3 529.6 L467.6 519.3 L475.0 517.0 L480.9 507.6 L488.2 497.3 L494.7 488.5 L498.5 491.4 L504.4 501.7 L510.2 512.0 L514.6 498.8 L519.0 492.3 L523.5 500.2 L530.8 509.0 L536.7 515.8 L544.0 506.1 L551.4 495.8 L557.3 497.3 L563.1 494.4 L569.0 484.0 L574.9 482.0 L580.8 487.0 L588.1 504.6 L594.0 514.9 L598.4 522.3 L602.8 514.9 L608.7 492.9 L613.1 487.0 L619.0 492.9 L626.3 479.7 L630.7 484.0 L636.6 488.5 L641.0 494.4 L646.9 497.3 L652.8 484.0 L658.6 477.6 L664.5 482.6 L670.4 487.0 L676.3 495.8 L680.7 497.3 L685.1 488.5 L689.5 487.0 L693.9 492.9 L698.3 510.5 L702.7 519.9 L707.1 512.0 L713.0 503.2 L718.9 504.6 L723.3 501.7 L727.7 510.5 L733.6 492.9 L736.5 484.0 L742.4 494.4 L749.7 475.8 L754.1 485.5 L758.5 478.2 L762.0 476.3 L766.0 485.3 L773.6 495.9 L778.1 503.4 L785.7 517.0 L793.2 530.6 L799.3 527.6 L808.3 542.7 L815.9 539.7 L823.4 536.7 L831.0 530.6 L837.0 515.5 L843.1 495.9 L847.6 489.8 L852.1 492.9 L856.7 503.4 L862.7 501.9 L868.8 509.5 L874.8 523.1 L880.8 527.6 L886.9 532.1 L891.4 536.0 L897.5 524.6 L902.0 498.9 L906.5 479.3 L911.1 483.8 L915.6 483.8 L920.1 491.4 L924.7 497.4 L929.2 505.0 L935.2 498.9 L939.8 505.0 L945.8 515.5 L950.3 536.7 L956.4 553.3 L962.0 564.5" fill="none" stroke="#f58b2e" stroke-width="1"/>
<path d="M464.7 470 V571" stroke="#3757c8" stroke-width="1.3"/>
<path d="M569.3 470 V571" stroke="#3757c8" stroke-width="1.3"/>
<path d="M698.6 470 V571" stroke="#3757c8" stroke-width="1.3"/>
<path d="M845.5 470 V571" stroke="#3757c8" stroke-width="1.3"/>
<path d="M920.4 470 V571" stroke="#3757c8" stroke-width="1.3"/>
<path d="M942.2 470 V571" stroke="#000" stroke-width="1.2" stroke-dasharray="3 3"/>
<path d="M462 470.5 H962" stroke="#111" stroke-width="1"/>
<path d="M462 570.5 H962" stroke="#111" stroke-width="1.4"/>
<path d="M465.6 571 V567.5 M474.3 571 V567.5 M483.0 571 V567.5 M491.6 571 V567.5 M500.3 571 V564.5 M509.0 571 V567.5 M517.6 571 V567.5 M526.3 571 V567.5 M535.0 571 V567.5 M543.6 571 V567.5 M552.3 571 V561 M561.0 571 V567.5 M569.6 571 V567.5 M578.3 571 V567.5 M587.0 571 V567.5 M595.6 571 V567.5 M604.3 571 V564.5 M613.0 571 V567.5 M621.6 571 V567.5 M630.3 571 V567.5 M639.0 571 V567.5 M647.6 571 V567.5 M656.3 571 V561 M665.0 571 V567.5 M673.6 571 V567.5 M682.3 571 V567.5 M691.0 571 V567.5 M699.6 571 V567.5 M708.3 571 V564.5 M717.0 571 V567.5 M725.6 571 V567.5 M734.3 571 V567.5 M743.0 571 V567.5 M751.6 571 V567.5 M760.3 571 V561 M769.0 571 V567.5 M777.6 571 V567.5 M786.3 571 V567.5 M795.0 571 V567.5 M803.6 571 V567.5 M812.3 571 V564.5 M821.0 571 V567.5 M829.6 571 V567.5 M838.3 571 V567.5 M847.0 571 V567.5 M855.6 571 V567.5 M864.3 571 V561 M873.0 571 V567.5 M881.6 571 V567.5 M890.3 571 V567.5 M899.0 571 V567.5 M907.6 571 V567.5 M916.3 571 V564.5 M925.0 571 V567.5 M933.6 571 V567.5 M942.3 571 V567.5 M951.0 571 V567.5 M959.6 571 V567.5" stroke="#111" stroke-width="1.1"/>
<text x="555" y="564.5" font-size="10" fill="#2a6496">11:00</text>
<text x="659" y="564.5" font-size="10" fill="#2a6496">12:00</text>
<text x="763" y="564.5" font-size="10" fill="#2a6496">13:00</text>
<text x="867" y="564.5" font-size="10" fill="#2a6496">14:00</text>
<text x="463" y="498" font-size="9.5" fill="#111" letter-spacing="-0.2">3000 m</text>
<text x="463" y="531" font-size="9.5" fill="#111" letter-spacing="-0.2">2000 m</text>
<text x="463" y="564" font-size="9.5" fill="#111" letter-spacing="-0.2">1000 m</text>
<rect x="944" y="479.5" width="11" height="10.5" fill="#f28a1e"/>
<rect x="941" y="476.5" width="11.5" height="11" fill="#f2f2f2" stroke="#111" stroke-width="1.3"/><path d="M941.8 487 V483 L944 481 L946 483.5 L949 480.5 L951.8 483.5 V487Z" fill="#f07c10"/>
</svg>
<div class="a" style="left:1025px;top:0;width:15px;height:778px;background:linear-gradient(90deg,#e4e4e4 0,#f4f4f4 1.5px,#fbfbfb 8px,#f6f6f6 13px,#cfcfcf 15px)"></div>
<div class="a" style="left:1029px;top:41px;width:8px;height:557px;border-radius:4px;background:#c1c1c1"></div>
<div class="a" style="left:1040px;top:0;width:49px;height:778px;background:#fff;overflow:hidden">
<div class="a" style="left:0;top:3px;width:49px;height:19px;background:#e9edf4"></div>
<div class="a" style="left:0;top:41px;width:49px;height:19px;background:#e9edf4"></div>
<div class="a" style="left:0;top:79px;width:49px;height:19px;background:#e9edf4"></div>
<div class="a" style="left:0;top:117px;width:49px;height:19px;background:#e9edf4"></div>
<div class="a" style="left:0;top:155px;width:49px;height:19px;background:#e9edf4"></div>
<div class="a" style="left:0;top:193px;width:49px;height:19px;background:#e9edf4"></div>
<div class="a" style="left:0;top:231px;width:49px;height:19px;background:#e9edf4"></div>
<div class="a" style="left:0;top:269px;width:49px;height:19px;background:#e9edf4"></div>
<div class="a" style="left:0;top:307px;width:49px;height:19px;background:#e9edf4"></div>
<div class="a" style="left:0;top:345px;width:49px;height:19px;background:#e9edf4"></div>
<div class="a" style="left:0;top:383px;width:49px;height:19px;background:#e9edf4"></div>
<div class="a" style="left:0;top:421px;width:49px;height:19px;background:#e9edf4"></div>
<div class="a" style="left:0;top:459px;width:49px;height:19px;background:#e9edf4"></div>
<div class="a" style="left:0;top:497px;width:49px;height:19px;background:#e9edf4"></div>
<div class="a" style="left:0;top:535px;width:49px;height:19px;background:#e9edf4"></div>
<div class="a" style="left:0;top:573px;width:49px;height:19px;background:#e9edf4"></div>
<div class="a" style="left:0;top:611px;width:49px;height:19px;background:#e9edf4"></div>
<div class="a" style="left:0;top:649px;width:49px;height:19px;background:#e9edf4"></div>
<div class="a" style="left:0;top:687px;width:49px;height:19px;background:#e9edf4"></div>
<div class="a" style="left:0;top:725px;width:49px;height:19px;background:#e9edf4"></div>
<div class="a" style="left:0;top:0;width:49px;height:3px;background:#d9dde3"></div>
<div class="a" style="left:0;top:0;width:49px;height:721px;background:linear-gradient(90deg,rgba(108,110,118,.8) 0,rgba(138,140,148,.52) 7px,rgba(168,170,178,.3) 17px,rgba(195,196,202,.16) 29px,rgba(220,220,224,.06) 40px,rgba(255,255,255,0) 49px)"></div>
<div class="a" style="left:42px;top:4.5px;font:13px/16px 'Liberation Sans',sans-serif;color:#2a1a08;white-space:nowrap">1</div>
<div class="a" style="left:42px;top:42.5px;font:13px/16px 'Liberation Sans',sans-serif;color:#2a1a08;white-space:nowrap">1</div>
<div class="a" style="left:42px;top:61.5px;font:13px/16px 'Liberation Sans',sans-serif;color:#2a1a08;white-space:nowrap">1</div>
<div class="a" style="left:42px;top:80.5px;font:13px/16px 'Liberation Sans',sans-serif;color:#2a1a08;white-space:nowrap">2</div>
<div class="a" style="left:42px;top:99.5px;font:13px/16px 'Liberation Sans',sans-serif;color:#2a1a08;white-space:nowrap">1</div>
<div class="a" style="left:42px;top:118.5px;font:13px/16px 'Liberation Sans',sans-serif;color:#2a1a08;white-space:nowrap">1</div>
<div class="a" style="left:42px;top:156.5px;font:13px/16px 'Liberation Sans',sans-serif;color:#2a1a08;white-space:nowrap">1</div>
<div class="a" style="left:42px;top:175.5px;font:13px/16px 'Liberation Sans',sans-serif;color:#2a1a08;white-space:nowrap">1</div>
<div class="a" style="left:42px;top:194.5px;font:13px/16px 'Liberation Sans',sans-serif;color:#2a1a08;white-space:nowrap">1</div>
<div class="a" style="left:42px;top:213.5px;font:13px/16px 'Liberation Sans',sans-serif;color:#2a1a08;white-space:nowrap">1</div>
<div class="a" style="left:42px;top:232.5px;font:13px/16px 'Liberation Sans',sans-serif;color:#2a1a08;white-space:nowrap">1</div>
<div class="a" style="left:42px;top:251.5px;font:13px/16px 'Liberation Sans',sans-serif;color:#2a1a08;white-space:nowrap">1</div>
<div class="a" style="left:42px;top:270.5px;font:13px/16px 'Liberation Sans',sans-serif;color:#2a1a08;white-space:nowrap">1</div>
<div class="a" style="left:42px;top:289.5px;font:13px/16px 'Liberation Sans',sans-serif;color:#2a1a08;white-space:nowrap">1</div>
<div class="a" style="left:42px;top:308.5px;font:13px/16px 'Liberation Sans',sans-serif;color:#2a1a08;white-space:nowrap">2</div>
<div class="a" style="left:42px;top:327.5px;font:13px/16px 'Liberation Sans',sans-serif;color:#2a1a08;white-space:nowrap">1</div>
<div class="a" style="left:42px;top:346.5px;font:13px/16px 'Liberation Sans',sans-serif;color:#2a1a08;white-space:nowrap">1</div>
<div class="a" style="left:42px;top:365.5px;font:13px/16px 'Liberation Sans',sans-serif;color:#2a1a08;white-space:nowrap">2</div>
<div class="a" style="left:42px;top:384.5px;font:13px/16px 'Liberation Sans',sans-serif;color:#2a1a08;white-space:nowrap">1</div>
<div class="a" style="left:42px;top:403.5px;font:13px/16px 'Liberation Sans',sans-serif;color:#2a1a08;white-space:nowrap">1</div>
<div class="a" style="left:42px;top:422.5px;font:13px/16px 'Liberation Sans',sans-serif;color:#2a1a08;white-space:nowrap">2</div>
<div class="a" style="left:42px;top:441.5px;font:13px/16px 'Liberation Sans',sans-serif;color:#2a1a08;white-space:nowrap">1</div>
<div class="a" style="left:42px;top:460.5px;font:13px/16px 'Liberation Sans',sans-serif;color:#2a1a08;white-space:nowrap">1</div>
<div class="a" style="left:42px;top:479.5px;font:13px/16px 'Liberation Sans',sans-serif;color:#2a1a08;white-space:nowrap">1</div>
<div class="a" style="left:42px;top:498.5px;font:13px/16px 'Liberation Sans',sans-serif;color:#2a1a08;white-space:nowrap">1</div>
<div class="a" style="left:42px;top:517.5px;font:13px/16px 'Liberation Sans',sans-serif;color:#2a1a08;white-space:nowrap">1</div>
<div class="a" style="left:42px;top:555.5px;font:13px/16px 'Liberation Sans',sans-serif;color:#2a1a08;white-space:nowrap">1</div>
<div class="a" style="left:42px;top:574.5px;font:13px/16px 'Liberation Sans',sans-serif;color:#2a1a08;white-space:nowrap">2</div>
<div class="a" style="left:42px;top:593.5px;font:13px/16px 'Liberation Sans',sans-serif;color:#2a1a08;white-space:nowrap">1</div>
<div class="a" style="left:42px;top:631.5px;font:13px/16px 'Liberation Sans',sans-serif;color:#2a1a08;white-space:nowrap">1</div>
<div class="a" style="left:42px;top:650.5px;font:13px/16px 'Liberation Sans',sans-serif;color:#2a1a08;white-space:nowrap">1</div>
<div class="a" style="left:42px;top:669.5px;font:13px/16px 'Liberation Sans',sans-serif;color:#2a1a08;white-space:nowrap">1</div>
<div class="a" style="left:42px;top:688.5px;font:13px/16px 'Liberation Sans',sans-serif;color:#2a1a08;white-space:nowrap">1</div>
<div class="a" style="left:42px;top:707.5px;font:13px/16px 'Liberation Sans',sans-serif;color:#2a1a08;white-space:nowrap">1</div>
<div class="a" style="left:0;top:721px;width:49px;height:24px;background:linear-gradient(90deg,rgba(120,120,125,.45) 0,rgba(160,160,165,.2) 12px,rgba(255,255,255,0) 30px),linear-gradient(#e4e4e4,#d2d2d2 70%,#c6c6c6);border-top:1px solid #8a8a8a"></div>
<div class="a" style="left:0;top:745px;width:49px;height:33px;background:linear-gradient(#7a6226,#8a7334 18%,#957e3e)"></div>
</div>
</body></html>
